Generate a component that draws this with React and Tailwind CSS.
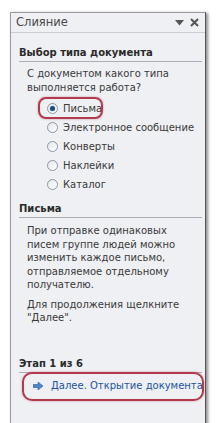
import React from "react";

const font = { fontFamily: '"DejaVu Sans", Verdana, sans-serif' };

const Radio = ({ checked }) => (
  <span className="relative flex h-[11px] w-[11px] shrink-0 items-center justify-center rounded-full border border-[#8e96a0] bg-gradient-to-br from-[#e4e6ea] to-[#ffffff]">
    {checked && (
      <span className="h-[5px] w-[5px] rounded-full bg-[#1d4f7c] shadow-[0_0_1px_#5fa0d8]" />
    )}
  </span>
);

const Option = ({ label, checked, marked }) => (
  <div className="relative flex h-[19px] items-center gap-[5px] whitespace-nowrap pl-[28px]">
    <Radio checked={checked} />
    <span>{label}</span>
    {marked && (
      <span className="absolute left-[19px] top-[-2px] h-[22px] w-[65px] rounded-[8px] border-2 border-[#b3394c] shadow-[0_0_2px_rgba(179,57,76,0.6)]" />
    )}
  </div>
);

const SectionTitle = ({ children, className = "" }) => (
  <div
    className={
      "mr-[3px] border-b border-[#a9adb4] pb-[1px] text-[10px] font-bold leading-[14px] text-[#2b2b2b] " +
      className
    }
  >
    {children}
  </div>
);

export default function App() {
  const options = [
    { label: "Письма", checked: true, marked: true },
    { label: "Электронное сообщение" },
    { label: "Конверты" },
    { label: "Наклейки" },
    { label: "Каталог" },
  ];

  return (
    <div
      className="h-[423px] w-[217px] overflow-hidden bg-white pl-[10px] pt-[12px]"
      style={font}
    >
      <div className="h-[430px] w-[196px] border border-[#9a9a9a] border-r-[#555] bg-[#eef0f3] shadow-[2px_1px_3px_rgba(0,0,0,0.45)]">
        <div className="flex h-[20px] items-center justify-between border-b border-[#c9cdd3] pl-[5px] pr-[6px] text-[11.5px] text-[#4a4a4a]">
          <span>Слияние</span>
          <div className="flex items-center gap-[6px]">
            <svg width="9" height="6" viewBox="0 0 9 6">
              <path d="M0 0h9L4.5 5.5z" fill="#555" />
            </svg>
            <svg width="9" height="9" viewBox="0 0 9 9">
              <path d="M1 1l7 7M8 1l-7 7" stroke="#555" strokeWidth="2" />
            </svg>
          </div>
        </div>

        <div className="pl-[8px] text-[10px] leading-[14px] text-[#3a3a3a]">
          <SectionTitle className="mt-[13px]">Выбор типа документа</SectionTitle>
          <div className="mt-[5px] pl-[8px]">
            С документом какого типа
            <br />
            выполняется работа?
          </div>
          <div className="mt-[4px]">
            {options.map((o) => (
              <Option key={o.label} {...o} />
            ))}
          </div>

          <SectionTitle className="mt-[8px]">Письма</SectionTitle>
          <div className="mt-[6px] pl-[8px] leading-[13.5px]">
            При отправке одинаковых
            <br />
            писем группе людей можно
            <br />
            изменить каждое письмо,
            <br />
            отправляемое отдельному
            <br />
            получателю.
          </div>
          <div className="mt-[6px] pl-[8px] leading-[13.5px]">
            Для продолжения щелкните
            <br />
            "Далее".
          </div>

          <SectionTitle className="mt-[32px]">Этап 1 из 6</SectionTitle>
          <div className="relative mt-[3px] flex h-[20px] items-center whitespace-nowrap pl-[14px] text-[#2255a0]">
            <svg width="10" height="8" viewBox="0 0 10 8" className="mr-[8px]">
              <path
                d="M0 2.5h5V0l5 4-5 4V5.5H0z"
                fill="#4f86c9"
                stroke="#2a5ea8"
                strokeWidth="0.6"
              />
            </svg>
            <span>Далее. Открытие документа</span>
            <span className="absolute left-[3px] top-[-4px] h-[29px] w-[182px] rounded-[10px] border-2 border-[#b3394c] shadow-[0_0_2px_rgba(179,57,76,0.6)]" />
          </div>
        </div>
      </div>
    </div>
  );
}
